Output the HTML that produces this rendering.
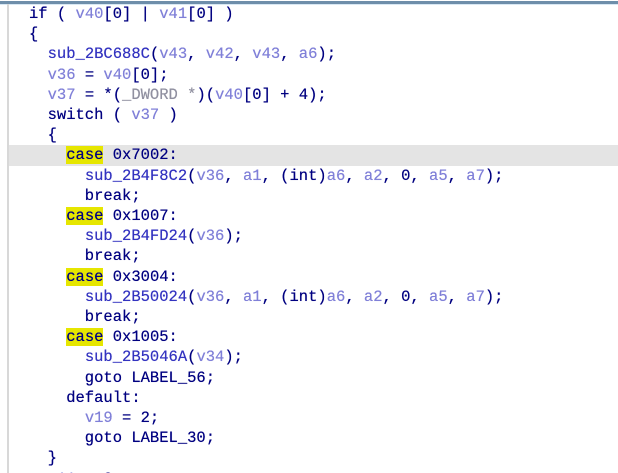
<!DOCTYPE html>
<html><head><meta charset="utf-8"><style>
html,body{margin:0;padding:0;background:#fff;width:618px;height:473px;overflow:hidden}
body{position:relative}
.top{position:absolute;left:0;top:1px;width:618px;height:3px;background:#6e8eaa}
.top2{position:absolute;left:0;top:4px;width:618px;height:1px;background:#d8e8f4}
.left{position:absolute;left:7px;top:4px;width:2px;height:469px;background:#d8d8d8}
.hl{position:absolute;left:9px;top:145px;width:609px;height:21px;background:#e4e4e4}
pre{position:absolute;left:29px;top:4px;margin:0;font-family:"Liberation Mono",monospace;font-size:15.5px;line-height:20.2px;color:#000080;text-shadow:0 0 0.4px currentColor}
.v{color:#8080d8}
.f{color:#3333c0}
.g{color:#9090a0}
.k{background:#e6e600}
</style></head><body>
<div class="top"></div><div class="top2"></div><div class="left"></div><div class="hl"></div>
<pre>if ( <span class="v">v40</span>[0] | <span class="v">v41</span>[0] )
{
  <span class="f">sub_2BC688C</span>(<span class="v">v43</span>, <span class="v">v42</span>, <span class="v">v43</span>, <span class="v">a6</span>);
  <span class="v">v36</span> = <span class="v">v40</span>[0];
  <span class="v">v37</span> = *(<span class="g">_DWORD *</span>)(<span class="v">v40</span>[0] + 4);
  switch ( <span class="v">v37</span> )
  {
    <span class="k">case</span> 0x7002:
      <span class="f">sub_2B4F8C2</span>(<span class="v">v36</span>, <span class="v">a1</span>, (int)<span class="v">a6</span>, <span class="v">a2</span>, 0, <span class="v">a5</span>, <span class="v">a7</span>);
      break;
    <span class="k">case</span> 0x1007:
      <span class="f">sub_2B4FD24</span>(<span class="v">v36</span>);
      break;
    <span class="k">case</span> 0x3004:
      <span class="f">sub_2B50024</span>(<span class="v">v36</span>, <span class="v">a1</span>, (int)<span class="v">a6</span>, <span class="v">a2</span>, 0, <span class="v">a5</span>, <span class="v">a7</span>);
      break;
    <span class="k">case</span> 0x1005:
      <span class="f">sub_2B5046A</span>(<span class="v">v34</span>);
      goto LABEL_56;
    default:
      <span class="v">v19</span> = 2;
      goto LABEL_30;
  }
  <span class="v">v11</span> = 0;
</pre>
</body></html>
